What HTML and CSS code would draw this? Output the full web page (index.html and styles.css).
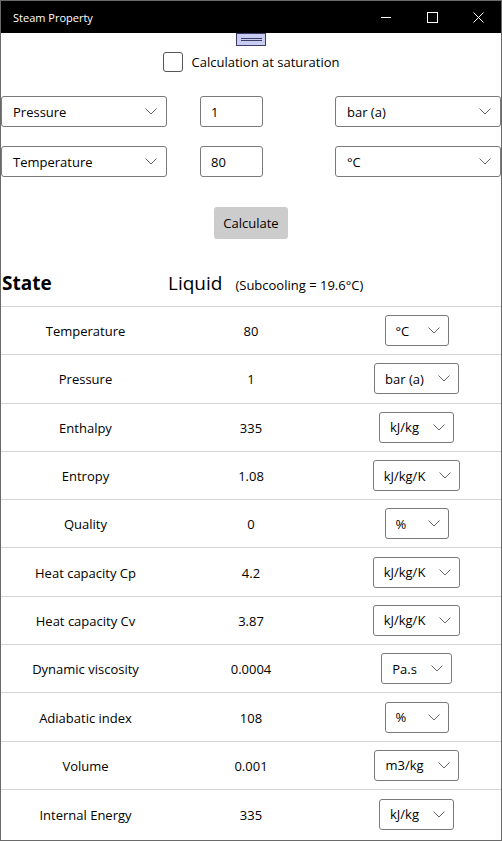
FILE: index.html
```html
<!DOCTYPE html>
<html>
<head>
<meta charset="utf-8">
<link rel="stylesheet" href="styles.css">
</head>
<body>
<div class="window">
  <div class="titlebar">
    <span class="title">Steam Property</span>
    <div class="controls">
      <span class="ctl"><svg width="10" height="10" viewBox="0 0 10 10"><line x1="0" y1="5.5" x2="10" y2="5.5" stroke="#fff" stroke-width="1"/></svg></span>
      <span class="ctl"><svg width="11" height="11" viewBox="0 0 11 11"><rect x="0.5" y="0.5" width="10" height="10" fill="none" stroke="#fff" stroke-width="1"/></svg></span>
      <span class="ctl"><svg width="11" height="11" viewBox="0 0 11 11"><path d="M0.5 0.5 L10.5 10.5 M10.5 0.5 L0.5 10.5" stroke="#fff" stroke-width="1"/></svg></span>
    </div>
  </div>
  <div class="content">
    <div class="grabber"><span class="grip"></span></div>
    <div class="sat"><span class="box"></span><span>Calculation at saturation</span></div>
    <div class="inputs">
      <div class="combo big"><span>Pressure</span><svg class="chev" width="12" height="7" viewBox="0 0 12 7"><polyline points="0.5,0.5 6,6 11.5,0.5" fill="none" stroke="#666" stroke-width="1"/></svg></div>
      <div class="tbox">1</div>
      <div class="combo big"><span>bar (a)</span><svg class="chev" width="12" height="7" viewBox="0 0 12 7"><polyline points="0.5,0.5 6,6 11.5,0.5" fill="none" stroke="#666" stroke-width="1"/></svg></div>
      <div class="combo big"><span>Temperature</span><svg class="chev" width="12" height="7" viewBox="0 0 12 7"><polyline points="0.5,0.5 6,6 11.5,0.5" fill="none" stroke="#666" stroke-width="1"/></svg></div>
      <div class="tbox">80</div>
      <div class="combo big"><span>°C</span><svg class="chev" width="12" height="7" viewBox="0 0 12 7"><polyline points="0.5,0.5 6,6 11.5,0.5" fill="none" stroke="#666" stroke-width="1"/></svg></div>
    </div>
    <div class="actions"><button class="calc">Calculate</button></div>
    <div class="state">
      <span class="state-label">State</span>
      <span class="state-value">Liquid</span>
      <span class="state-note">(Subcooling = 19.6°C)</span>
    </div>
    <div class="props">
      <div class="row"><span class="name">Temperature</span><span class="val">80</span><span class="unitcell"><span class="combo small"><span>°C</span><svg class="chev" width="12" height="7" viewBox="0 0 12 7"><polyline points="0.5,0.5 6,6 11.5,0.5" fill="none" stroke="#666" stroke-width="1"/></svg></span></span></div>
      <div class="row"><span class="name">Pressure</span><span class="val">1</span><span class="unitcell"><span class="combo small"><span>bar (a)</span><svg class="chev" width="12" height="7" viewBox="0 0 12 7"><polyline points="0.5,0.5 6,6 11.5,0.5" fill="none" stroke="#666" stroke-width="1"/></svg></span></span></div>
      <div class="row"><span class="name">Enthalpy</span><span class="val">335</span><span class="unitcell"><span class="combo small"><span>kJ/kg</span><svg class="chev" width="12" height="7" viewBox="0 0 12 7"><polyline points="0.5,0.5 6,6 11.5,0.5" fill="none" stroke="#666" stroke-width="1"/></svg></span></span></div>
      <div class="row"><span class="name">Entropy</span><span class="val">1.08</span><span class="unitcell"><span class="combo small"><span>kJ/kg/K</span><svg class="chev" width="12" height="7" viewBox="0 0 12 7"><polyline points="0.5,0.5 6,6 11.5,0.5" fill="none" stroke="#666" stroke-width="1"/></svg></span></span></div>
      <div class="row"><span class="name">Quality</span><span class="val">0</span><span class="unitcell"><span class="combo small"><span>%</span><svg class="chev" width="12" height="7" viewBox="0 0 12 7"><polyline points="0.5,0.5 6,6 11.5,0.5" fill="none" stroke="#666" stroke-width="1"/></svg></span></span></div>
      <div class="row"><span class="name">Heat capacity Cp</span><span class="val">4.2</span><span class="unitcell"><span class="combo small"><span>kJ/kg/K</span><svg class="chev" width="12" height="7" viewBox="0 0 12 7"><polyline points="0.5,0.5 6,6 11.5,0.5" fill="none" stroke="#666" stroke-width="1"/></svg></span></span></div>
      <div class="row"><span class="name">Heat capacity Cv</span><span class="val">3.87</span><span class="unitcell"><span class="combo small"><span>kJ/kg/K</span><svg class="chev" width="12" height="7" viewBox="0 0 12 7"><polyline points="0.5,0.5 6,6 11.5,0.5" fill="none" stroke="#666" stroke-width="1"/></svg></span></span></div>
      <div class="row"><span class="name">Dynamic viscosity</span><span class="val">0.0004</span><span class="unitcell"><span class="combo small"><span>Pa.s</span><svg class="chev" width="12" height="7" viewBox="0 0 12 7"><polyline points="0.5,0.5 6,6 11.5,0.5" fill="none" stroke="#666" stroke-width="1"/></svg></span></span></div>
      <div class="row"><span class="name">Adiabatic index</span><span class="val">108</span><span class="unitcell"><span class="combo small"><span>%</span><svg class="chev" width="12" height="7" viewBox="0 0 12 7"><polyline points="0.5,0.5 6,6 11.5,0.5" fill="none" stroke="#666" stroke-width="1"/></svg></span></span></div>
      <div class="row"><span class="name">Volume</span><span class="val">0.001</span><span class="unitcell"><span class="combo small"><span>m3/kg</span><svg class="chev" width="12" height="7" viewBox="0 0 12 7"><polyline points="0.5,0.5 6,6 11.5,0.5" fill="none" stroke="#666" stroke-width="1"/></svg></span></span></div>
      <div class="row last"><span class="name">Internal Energy</span><span class="val">335</span><span class="unitcell"><span class="combo small"><span>kJ/kg</span><svg class="chev" width="12" height="7" viewBox="0 0 12 7"><polyline points="0.5,0.5 6,6 11.5,0.5" fill="none" stroke="#666" stroke-width="1"/></svg></span></span></div>
    </div>
  </div>
</div>
</body>
</html>
```
FILE: styles.css
```css
* { box-sizing: border-box; }
html, body { margin: 0; padding: 0; background: #fff; }
body {
  font-family: "Open Sans", "Noto Sans", sans-serif;
  font-size: 13px;
  color: #000;
}
.window {
  width: 502px;
  height: 841px;
  border: 1px solid #6a6a6a;
  overflow: hidden;
  display: flex;
  flex-direction: column;
}
.titlebar {
  height: 32px;
  background: #000;
  color: #fff;
  display: flex;
  align-items: center;
  justify-content: space-between;
  flex: none;
}
.title {
  padding-left: 12px;
  font-size: 11px;
}
.controls { display: flex; height: 100%; }
.ctl {
  width: 46px;
  display: flex;
  align-items: center;
  justify-content: center;
}
.ctl svg { display: block; }
.content { display: flex; flex-direction: column; flex: 1; }
.grabber { display: flex; justify-content: center; }
.grip {
  width: 30px;
  height: 13px;
  background: #c7ccf0;
  border: 1px solid #3c3c68;
  display: flex;
  flex-direction: column;
  justify-content: center;
  align-items: center;
  gap: 1px;
}
.grip::before, .grip::after {
  content: "";
  display: block;
  width: 21px;
  height: 1px;
  background: #3c3c68;
}
.sat {
  display: flex;
  justify-content: center;
  align-items: center;
  gap: 9px;
  margin-top: 6px;
  height: 20px;
  font-size: 13px;
}
.box {
  width: 20px;
  height: 20px;
  border: 1px solid #555;
  border-radius: 3px;
  background: #fff;
}
.inputs {
  display: grid;
  grid-template-columns: 199px 135px 1fr;
  row-gap: 19px;
  margin-top: 24px;
}
.combo {
  display: flex;
  align-items: center;
  justify-content: space-between;
  border: 1px solid #7a7a7a;
  border-radius: 3px;
  height: 31px;
  background: #fff;
}
.combo.big {
  width: 166px;
  padding: 0 9px 0 11px;
}
.tbox {
  width: 63px;
  height: 31px;
  border: 1px solid #7a7a7a;
  border-radius: 3px;
  display: flex;
  align-items: center;
  padding-left: 10px;
}
.chev { display: block; flex: none; }
.actions {
  display: flex;
  justify-content: center;
  margin-top: 30px;
}
.calc {
  font-family: inherit;
  font-size: 13px;
  width: 74px;
  height: 32px;
  background: #cccccc;
  border: none;
  border-radius: 3px;
  color: #000;
  padding: 0;
}
.state {
  display: flex;
  align-items: baseline;
  height: 68px;
  padding-top: 31px;
  border-bottom: 1px solid #d4d4d4;
}
.state-label {
  width: 167px;
  padding-left: 1px;
  font-weight: bold;
  font-size: 19px;
}
.state-value {
  font-size: 19px;
  margin-right: 13px;
}
.state-note { font-size: 13px; }
.props { display: flex; flex-direction: column; }
.row {
  display: grid;
  grid-template-columns: 169px 162px 1fr;
  align-items: center;
  height: 48.3px;
  border-bottom: 1px solid #d4d4d4;
}
.row.last { border-bottom: none; }
.name, .val { text-align: center; padding-top: 1px; }
.unitcell { display: flex; justify-content: center; }
.combo.small {
  min-width: 64px;
  padding: 0 8px 0 10px;
  gap: 14px;
}
```
